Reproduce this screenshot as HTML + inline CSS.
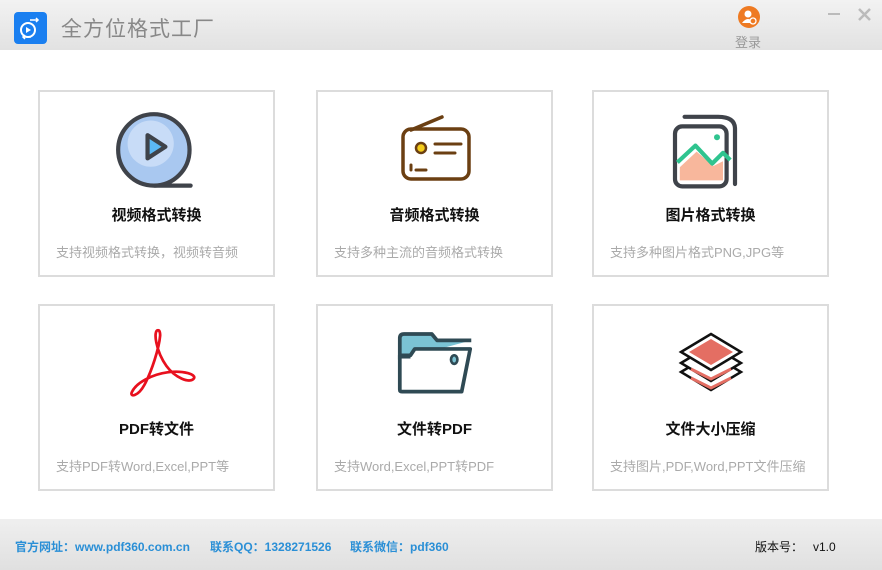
<!DOCTYPE html>
<html><head><meta charset="utf-8"><style>
*{margin:0;padding:0;box-sizing:border-box}
body{width:882px;height:570px;overflow:hidden;background:#fff;font-family:"Liberation Sans","Noto Sans CJK SC",sans-serif;position:relative}
.top{position:absolute;left:0;top:0;width:882px;height:50px;background:linear-gradient(#f2f2f2,#e2e2e2)}
.logo{position:absolute;left:14px;top:12px;width:33px;height:32px;border-radius:4px;background:#1a7ff0}
.title{position:absolute;left:61px;top:13px;font-size:21px;color:#888;letter-spacing:1px}
.card{position:absolute;width:237px;height:187px;border:2px solid #dcdcdc;background:#fff}
.card h3{position:absolute;top:112px;left:0;right:0;text-align:center;font-size:15px;font-weight:bold;color:#111}
.card p{position:absolute;top:150px;left:16px;font-size:13px;color:#aaa;white-space:nowrap}
.card svg{position:absolute;left:50%;top:20px;transform:translateX(-50%)}
.foot{position:absolute;left:0;top:519px;width:882px;height:51px;background:linear-gradient(#efefef,#e0e0e0)}
.foot span{position:absolute;top:19px;font-size:12px;font-weight:bold;color:#2a8fd6}
</style></head><body>
<div class="top">
<div class="logo"><svg width="33" height="32" viewBox="0 0 33 32"><circle cx="14" cy="18" r="7" fill="none" stroke="#fff" stroke-width="2"/><path d="M12 15l5 3-5 3z" fill="#fff"/><path d="M16 8h8M22 6l2 2-2 2M9 25h8M11 23l-2 2 2 2" stroke="#fff" stroke-width="1.5" fill="none"/></svg></div>
<div class="title">全方位格式工厂</div>
<svg style="position:absolute;left:738px;top:6px" width="22" height="22"><circle cx="11" cy="11" r="11" fill="#ee7a22"/><circle cx="10" cy="8" r="3.5" fill="#fff"/><path d="M4 17q6-8 12 0z" fill="#fff"/><circle cx="15" cy="15" r="3" fill="#ee7a22" stroke="#fff" stroke-width="1.3"/></svg>
<div style="position:absolute;left:735px;top:32px;font-size:13px;color:#999">登录</div>
<div style="position:absolute;left:828px;top:13px;width:12px;height:2px;background:#bbb"></div>
<svg style="position:absolute;left:858px;top:8px" width="13" height="13"><path d="M1 1L12 12M12 1L1 12" stroke="#bbb" stroke-width="2.5"/></svg>
</div>

<div class="card" style="left:38px;top:90px">
<svg width="84" height="84" viewBox="0 0 80 80" style="top:18px"><circle cx="37" cy="38" r="34" fill="#a9c8f0" stroke="#3f434a" stroke-width="4"/><circle cx="34" cy="32" r="22" fill="#c8dcf7"/><path d="M31 24l17 11-17 11z" fill="#5bb8f5" stroke="#3f434a" stroke-width="4" stroke-linejoin="round"/><path d="M38 72h34" stroke="#3f434a" stroke-width="4" stroke-linecap="round"/></svg>
<h3>视频格式转换</h3><p>支持视频格式转换，视频转音频</p></div>

<div class="card" style="left:316px;top:90px">
<svg width="80" height="80" viewBox="0 0 80 80"><path d="M16 18L47 5" stroke="#6b3f12" stroke-width="3.5" stroke-linecap="round"/><rect x="8" y="17" width="66" height="50" rx="8" fill="none" stroke="#6b3f12" stroke-width="3.5"/><circle cx="26" cy="36" r="5" fill="#f4cc1a" stroke="#6b3f12" stroke-width="2.5"/><path d="M40 32h26M40 41h20M21 58h10M16 53v5" stroke="#6b3f12" stroke-width="3" stroke-linecap="round"/></svg>
<h3>音频格式转换</h3><p>支持多种主流的音频格式转换</p></div>

<div class="card" style="left:592px;top:90px">
<svg width="96" height="96" viewBox="0 0 80 80" style="top:14px"><path d="M18 9h28q14 0 14 10v46" fill="none" stroke="#3f434a" stroke-width="3.5" stroke-linecap="round"/><rect x="10" y="17" width="43" height="50" rx="6" fill="none" stroke="#3f434a" stroke-width="3.5"/><path d="M14 51l14-13 14 12 8-4v16H14z" fill="#f8b79c"/><path d="M12 47l15-14 14 15 9-9 6 6" fill="none" stroke="#2fc48f" stroke-width="3.5" stroke-linejoin="round"/><circle cx="45" cy="26" r="2.5" fill="#2fc48f"/></svg>
<h3>图片格式转换</h3><p>支持多种图片格式PNG,JPG等</p></div>

<div class="card" style="left:38px;top:304px">
<svg width="84" height="84" viewBox="0 0 80 80" style="top:18px"><path d="M41 6c-5 0-2 20 8 34 8 11 22 17 26 12 3-4-10-8-25-6-15 2-30 10-34 19-2 5 6 4 12-7 7-13 14-35 15-47 0-4-1-5-2-5z" fill="none" stroke="#e8101e" stroke-width="2.6"/></svg>
<h3>PDF转文件</h3><p>支持PDF转Word,Excel,PPT等</p></div>

<div class="card" style="left:316px;top:304px">
<svg width="96" height="86" viewBox="0 0 90 80" style="top:17px"><path d="M12 10h30l5 6H12z" fill="#7bc3d4"/><path d="M12 34v-20q0-4 4-4h26l5 6h32" fill="#7bc3d4" stroke="#2f4a54" stroke-width="3.5" stroke-linejoin="round"/><path d="M12 30h10l4-6h52l-8 40H14q-2 0-2-2z" fill="#fff" stroke="#2f4a54" stroke-width="3.5" stroke-linejoin="round"/><rect x="12" y="30" width="10" height="3" fill="#2f4a54"/><ellipse cx="63" cy="34" rx="3" ry="4" fill="#7bc3d4" stroke="#2f4a54" stroke-width="2.5"/></svg>
<h3>文件转PDF</h3><p>支持Word,Excel,PPT转PDF</p></div>

<div class="card" style="left:592px;top:304px">
<svg width="80" height="80" viewBox="0 0 80 80"><path d="M10 46l30-18 30 18-30 18z" fill="#fff" stroke="#111" stroke-width="2.5"/><path d="M20 52l20 10 20-10" fill="none" stroke="#e46e63" stroke-width="3"/><path d="M10 37l30-18 30 18-30 18z" fill="#fff" stroke="#111" stroke-width="2.5"/><path d="M20 43l20 10 20-10" fill="none" stroke="#e46e63" stroke-width="3"/><path d="M10 26l30-18 30 18-30 18z" fill="#fff" stroke="#111" stroke-width="2.5"/><path d="M18 26l22-13 22 13-22 13z" fill="#e46e63"/></svg>
<h3>文件大小压缩</h3><p>支持图片,PDF,Word,PPT文件压缩</p></div>

<div class="foot">
<span style="left:15px">官方网址：www.pdf360.com.cn</span>
<span style="left:210px">联系QQ：1328271526</span>
<span style="left:350px">联系微信：pdf360</span>
<span style="left:755px;color:#111;font-weight:normal">版本号：&nbsp;&nbsp;&nbsp;v1.0</span>
</div>
</body></html>
